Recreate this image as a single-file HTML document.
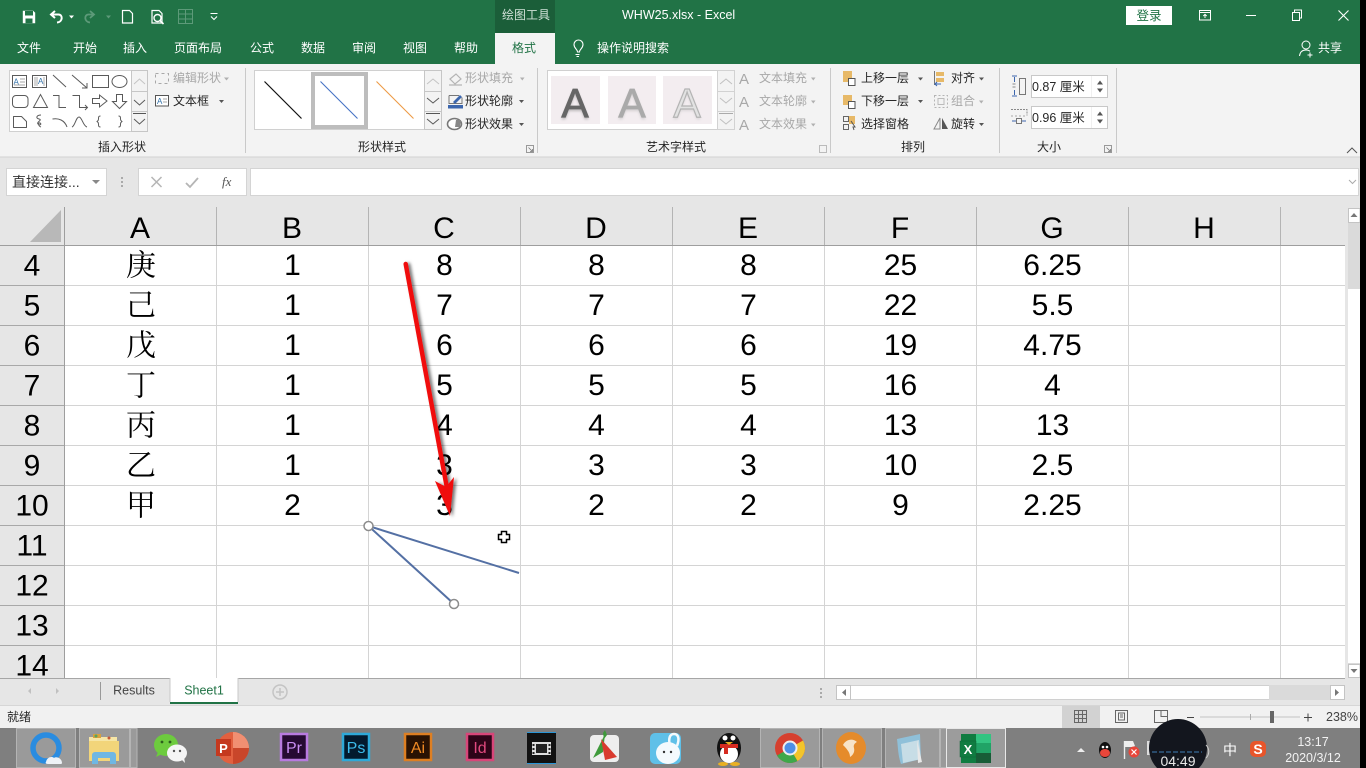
<!DOCTYPE html>
<html><head><meta charset="utf-8"><style>
html,body{margin:0;padding:0;background:#000;overflow:hidden}
svg{display:block;font-family:"Liberation Sans","Noto Sans CJK SC",sans-serif}
.r{font-size:12px;fill:#262626}
.g{font-size:12px;fill:#a8a8a8}
.w{font-size:12px;fill:#fff}
.c{font-size:30px;fill:#000;text-anchor:middle;font-family:"Liberation Sans",sans-serif}
.z{font-size:30px;fill:#000;text-anchor:middle;font-family:"Noto Serif CJK SC",serif}
.m{text-anchor:middle}
.s{fill:none;stroke:#5a5a5a;stroke-width:1}
.d{fill:#555}
</style></head><body>
<svg width="1366" height="768" viewBox="0 0 1366 768" xmlns="http://www.w3.org/2000/svg">
<defs>
<filter id="sh" x="-30%" y="-10%" width="160%" height="120%"><feDropShadow dx="2.5" dy="1" stdDeviation="1.6" flood-color="#000" flood-opacity=".55"/></filter>
<filter id="bl" x="-20%" y="-20%" width="140%" height="150%"><feGaussianBlur stdDeviation="1.4"/></filter>
</defs>
<!-- title bar -->
<rect width="1366" height="64" fill="#217346"/>
<rect x="495" y="0" width="60" height="33" fill="#1b5e39"/>
<rect x="495" y="33" width="60" height="31" fill="#f3f3f3"/>
<g fill="none" stroke="#fff" stroke-width="1.6">
<path d="M22.800 10.800h10.400l2 2v10.400h-12.400z" fill="#fff" stroke="none"/>
<rect x="25" y="11" width="8" height="4.500" fill="#217346" stroke="none"/>
<rect x="25.500" y="18.500" width="7" height="4.700" fill="#217346" stroke="none"/>
<path d="M55 11l-4 3.500 4 3.500M51.500 14.500h7c4.500 0 4.500 7.500 -1.500 8" stroke-width="2"/>
<path d="M90 11l4 3.500-4 3.500M93.500 14.500h-5c-4.500 0 -4.500 7.500 1.500 8" stroke="#5d9a79" stroke-width="1.800"/>
<path d="M122.500 10.500h7l3 3v9.500h-10z" stroke-width="1.200"/>
<path d="M152 10.500h7l3 3v9.500h-10z" stroke-width="1.200"/>
<circle cx="157.500" cy="18" r="3.500" stroke-width="1.400"/><path d="M160 20.500l3.500 3.500" stroke-width="1.600"/>
<rect x="178.500" y="9.500" width="14" height="14" stroke="#5d9a79" stroke-width="1"/><path d="M178.500 14h14M178.500 19h14M185.500 9.500v14" stroke="#5d9a79" stroke-width="1"/>
<path d="M210.500 13.500h7M211 16.500l3 3 3-3" stroke-width="1.100"/>
</g>
<path d="M69 15.500h5l-2.500 3z" fill="#fff"/><path d="M106 15.500h5l-2.500 3z" fill="#5d9a79"/>
<text x="502" y="19" class="w" style="fill:#cfe0d6">绘图工具</text>
<text x="622" y="19" class="w" style="font-size:12.500px">WHW25.xlsx  -  Excel</text>
<rect x="1126" y="6" width="46" height="19" fill="#fff"/>
<text x="1149" y="20" class="r m" style="fill:#217346;font-size:12.500px">登录</text>
<g fill="none" stroke="#fff" stroke-width="1">
<rect x="1199.500" y="10.500" width="11" height="9.500"/><path d="M1199.500 12.500h11M1205 18v-3.500M1203.300 16l1.700-1.700 1.700 1.700"/>
<path d="M1246 15.500h10"/>
<rect x="1292.500" y="12.500" width="7" height="8"/><path d="M1294.500 12.500v-2.500h7v8h-2"/>
<path d="M1338.500 10.500l10 10M1348.500 10.500l-10 10" stroke-width="1.100"/>
<path d="M577.500 52.500c0-3-3.500-3.500-3.500-7.500a4.500 4.500 0 0 1 9 0c0 4-3.500 4.500-3.500 7.500h-2zM575.500 55h4M576.500 57h2.500" transform="translate(0 -.5)" stroke-width="1.100"/>
<circle cx="1306" cy="45" r="4"/><path d="M1299.500 56c.5-4 3-6 6.500-6 1.500 0 3 .4 4 1.300M1310 52.500v5M1307.500 55h5"/>
</g>
<g class="w" text-anchor="middle">
<text x="29" y="52">文件</text><text x="85" y="52">开始</text><text x="135" y="52">插入</text><text x="198" y="52">页面布局</text><text x="262" y="52">公式</text><text x="313" y="52">数据</text><text x="364" y="52">审阅</text><text x="415" y="52">视图</text><text x="466" y="52">帮助</text>
</g>
<text x="524" y="52" class="m" style="font-size:12px;fill:#217346">格式</text>
<text x="597" y="52" class="w">操作说明搜索</text>
<text x="1318" y="52" class="w">共享</text>

<!-- ribbon -->
<rect y="64" width="1366" height="93" fill="#f3f3f3"/>
<rect y="157" width="1366" height="50" fill="#e6e6e6"/>
<rect y="156.500" width="1366" height="1" fill="#d2d2d2"/>
<g fill="#c9c9c9"><rect x="245" y="68" width="1" height="85"/><rect x="537" y="68" width="1" height="85"/><rect x="830" y="68" width="1" height="85"/><rect x="999" y="68" width="1" height="85"/><rect x="1116" y="68" width="1" height="85"/></g>

<!-- insert shapes gallery -->
<rect x="9.500" y="70.500" width="138" height="61" fill="#fff" stroke="#d0d0d0"/>
<rect x="131.500" y="70.500" width="16" height="61" fill="#f3f3f3" stroke="#c6c6c6"/>
<path d="M131.500 91.500h16M131.500 111.500h16" stroke="#c6c6c6"/>
<path d="M133 113.500h13" stroke="#555"/>
<path d="M134 84l5.500-5 5.500 5" fill="none" stroke="#c4c4c4"/><path d="M134 100l5.500 5 5.500-5M134 119l5.500 5 5.500-5" class="s"/>
<g class="s">
<rect x="12.500" y="75.500" width="14" height="12"/>
<rect x="32.500" y="75.500" width="14" height="12"/>
<path d="M53 75l13 12"/><path d="M72 75l15 13M87 83v5h-5"/>
<rect x="92.500" y="75.500" width="16" height="12"/><ellipse cx="119.500" cy="81.500" rx="7.500" ry="6"/>
<rect x="12.500" y="95.500" width="15.500" height="12" rx="3.500"/><path d="M33.500 107.500l7-13 7 13z"/>
<path d="M53 95.500h6v12h7"/><path d="M72.500 95.500h7v12h8M85 105l2.500 2.500-2.500 2.500"/>
<path d="M92.500 98.500h7v-3.500l7.500 6-7.500 6v-3.500h-7z"/><path d="M116.500 94.500h6v7h4l-7 7-7-7h4z"/>
<path d="M13.500 116.500h8l5 5v6h-13z" stroke-linejoin="round"/><path d="M41 115c-4 0-6 3-2 4 4 1-3 3-1 5 2 2 4 0 2-1-2-1-2 3 1 4"/>
<path d="M52.500 119c6-1 12 1 14.500 8"/><path d="M72 127c3-1 4-10 7-10 3 0 4 9 8 10"/>
<path d="M100.500 116c-2 0-2 1-2 3s-1 2-1.500 2.500c.5.500 1.500.5 1.500 2.500s0 3 2 3M118.500 116c2 0 2 1 2 3s1 2 1.500 2.500c-.5.500-1.500.5-1.500 2.500s0 3-2 3"/>
</g>
<text x="13.500" y="84.500" style="font-size:8px;fill:#2e6fa8">A</text><path d="M20 79h5M20 82h5M14 85h11" stroke="#888" stroke-width=".7"/>
<text x="38" y="84" style="font-size:8px;fill:#2e6fa8">A</text><path d="M35 77v9M37 77v9M44 77v9" stroke="#888" stroke-width=".7"/>

<g fill="none" stroke="#a8a8a8"><rect x="155.500" y="73.500" width="13" height="10" stroke-dasharray="3 3"/></g>
<text x="173" y="82" class="g">编辑形状</text><path d="M224 77.500h5l-2.500 3z" fill="#b0b0b0"/>
<rect x="155.500" y="95.500" width="13" height="10.500" fill="#fff" stroke="#555"/><text x="157" y="104" style="font-size:8px;fill:#2e6fa8">A</text><path d="M163 99h4M163 102h4" stroke="#888" stroke-width=".8"/>
<text x="173" y="105" class="r">文本框</text><path d="M219 100h5l-2.500 3z" class="d"/>
<text x="122" y="151" class="r m">插入形状</text>

<!-- shape style gallery -->
<rect x="254.500" y="70.500" width="187" height="59" fill="#fff" stroke="#d0d0d0"/>
<rect x="313" y="74" width="53" height="53" fill="#fff" stroke="#bdbdbd" stroke-width="4"/>
<path d="M264.500 81.500l37 37" stroke="#111" stroke-width="1.200"/>
<path d="M320.500 81.500l37 37" stroke="#4472c4" stroke-width="1.100"/>
<path d="M376.500 81.500l37 37" stroke="#ed9a45" stroke-width="1.100"/>
<rect x="424.500" y="70.500" width="17" height="59" fill="#f3f3f3" stroke="#c6c6c6"/>
<path d="M424.500 91.500h17M424.500 111.500h17" stroke="#c6c6c6"/><path d="M426 113.500h14" stroke="#555"/>
<path d="M427 84l6-5 6 5" fill="none" stroke="#c4c4c4"/><path d="M427 98l6 5 6-5M427 119l6 5 6-5" class="s"/>
<path d="M450 79l6-5 5 5-6 5zM449 85h13" fill="none" stroke="#b4b4b4" stroke-width="1.200"/>
<text x="465" y="82" class="g">形状填充</text><path d="M520 77.500h4.500l-2.200 3z" fill="#b0b0b0"/>
<rect x="448" y="105" width="15" height="3.500" fill="#3c66ad"/><path d="M449 95.500h10M449 95.500v8h13v-6" fill="none" stroke="#777"/><path d="M453 102l7-7 2 2-7 7z" fill="#3c66ad"/>
<text x="465" y="105" class="r">形状轮廓</text><path d="M519 100h5l-2.500 3z" class="d"/>
<ellipse cx="454.500" cy="124" rx="7" ry="5.500" fill="#fff" stroke="#777" stroke-width="1.600"/><path d="M456 120h5l-1 7h-5z" fill="#888"/>
<text x="465" y="128" class="r">形状效果</text><path d="M519 123h5l-2.500 3z" class="d"/>
<text x="382" y="151" class="r m">形状样式</text>
<rect x="526.500" y="145.500" width="7" height="7" fill="none" stroke="#999"/><path d="M528.500 147.500l4 4M532.500 149v2.500h-2.500" fill="none" stroke="#777" stroke-width=".8"/>

<!-- wordart gallery -->
<rect x="547.500" y="70.500" width="187" height="59" fill="#fff" stroke="#d0d0d0"/>
<rect x="551" y="76" width="49" height="48" fill="#f3edf0"/><rect x="608" y="76" width="48" height="48" fill="#f3edf0"/><rect x="663" y="76" width="49" height="48" fill="#f3edf0"/>
<g filter="url(#bl)" opacity=".45" style="font-family:'Liberation Sans';font-size:41px" text-anchor="middle"><text x="575" y="119" fill="#777">A</text><text x="632" y="119" fill="#aaa">A</text><text x="687" y="119" fill="#bbb">A</text></g>
<text x="575" y="117" class="m" style="font-size:41px;fill:#666;stroke:#666;stroke-width:.8;font-family:'Liberation Sans'">A</text>
<text x="632" y="117" class="m" style="font-size:41px;fill:#aaa;stroke:#aaa;stroke-width:.8;font-family:'Liberation Sans'">A</text>
<text x="687" y="117" class="m" style="font-size:41px;fill:#e2e2e2;stroke:#b4b4b4;stroke-width:1.200;font-family:'Liberation Sans'">A</text>
<rect x="717.500" y="70.500" width="17" height="59" fill="#f3f3f3" stroke="#d2d2d2"/>
<path d="M717.500 91.500h17M717.500 111.500h17" stroke="#d2d2d2"/><path d="M719 113.500h14" stroke="#aaa"/>
<path d="M720 84l6-5 6 5M720 98l6 5 6-5M720 119l6 5 6-5" fill="none" stroke="#c0c0c0"/>
<g style="font-size:15px;fill:#a8a8a8;font-family:'Liberation Sans'"><text x="744" y="84" class="m">A</text><text x="744" y="107" class="m">A</text><text x="744" y="130" class="m">A</text></g>
<text x="759" y="82" class="g">文本填充</text><text x="759" y="105" class="g">文本轮廓</text><text x="759" y="128" class="g">文本效果</text>
<path d="M811 77.500h4.500l-2.200 3zM811 100.500h4.500l-2.200 3zM811 123.500h4.500l-2.200 3z" fill="#b0b0b0"/>
<text x="676" y="151" class="r m">艺术字样式</text>
<rect x="819.500" y="145.500" width="7" height="7" fill="none" stroke="#bbb"/>

<!-- arrange -->
<rect x="843" y="71" width="9" height="11" fill="#e7b968"/><rect x="848.500" y="78.500" width="6.500" height="7" fill="#fff" stroke="#555"/>
<text x="861" y="82" class="r">上移一层</text><path d="M918 77.500h5l-2.500 3z" class="d"/>
<rect x="843" y="95" width="9" height="10" fill="#e7b968"/><rect x="848.500" y="101.500" width="6.500" height="7" fill="#fff" stroke="#555"/>
<text x="861" y="105" class="r">下移一层</text><path d="M918 100h5l-2.500 3z" class="d"/>
<path d="M843.500 116.500h5v5h-5zM843.500 124.500h5v5h-5z" fill="none" stroke="#666"/><rect x="849" y="116" width="6" height="8" fill="#e7b968"/><path d="M851 121l4 6-2 0 1 3" fill="none" stroke="#555"/>
<text x="861" y="128" class="r">选择窗格</text>
<rect x="936" y="72" width="8" height="4" fill="#e7b968"/><rect x="936" y="78" width="8" height="4" fill="#e7b968"/><path d="M934.500 71v14" stroke="#777"/><path d="M935 84h6M937 82l-2 2 2 2" fill="none" stroke="#3c66ad"/>
<text x="951" y="82" class="r">对齐</text><path d="M979 77.500h5l-2.500 3z" class="d"/>
<rect x="934.500" y="95.500" width="13" height="12" fill="none" stroke="#b4b4b4" stroke-dasharray="2 2"/><rect x="938" y="98.500" width="6" height="6" fill="none" stroke="#bbb"/>
<text x="951" y="105" class="g">组合</text><path d="M979 100.500h4.500l-2.200 3z" fill="#b0b0b0"/>
<path d="M940 118l-6 11h6z" fill="none" stroke="#888"/><path d="M942 118l6 11h-6z" fill="#555"/>
<text x="951" y="128" class="r">旋转</text><path d="M979 123h5l-2.500 3z" class="d"/>
<text x="913" y="151" class="r m">排列</text>

<!-- size -->
<path d="M1012 76h5M1012 96h5M1014.500 77v5M1014.500 90v5" stroke="#3c66ad" fill="none"/><rect x="1019.500" y="78.500" width="6" height="16" fill="none" stroke="#777"/><path d="M1012.500 84h3M1012.500 87h3" stroke="#888"/>
<path d="M1011 109.500h16v6" fill="none" stroke="#888" stroke-dasharray="2 1"/><path d="M1011 116h16" stroke="#aaa" stroke-dasharray="2 2"/><path d="M1012 121h4M1022 121h4" stroke="#3c66ad"/><rect x="1016.500" y="118.500" width="5" height="5" fill="none" stroke="#777"/>
<rect x="1031.500" y="75.500" width="76" height="22" fill="#fff" stroke="#c8c8c8"/><rect x="1031.500" y="106.500" width="76" height="22" fill="#fff" stroke="#c8c8c8"/>
<path d="M1091.500 76v21M1091.500 107v21" stroke="#f0f0f0"/>
<text x="1032" y="91" class="r" style="font-size:12.500px">0.87 厘米</text><text x="1032" y="122" class="r" style="font-size:12.500px">0.96 厘米</text>
<path d="M1097 84.500h6l-3-4zM1097 88.500h6l-3 4zM1097 115.500h6l-3-4zM1097 119.500h6l-3 4z" class="d"/>
<text x="1049" y="151" class="r m">大小</text>
<rect x="1104.500" y="145.500" width="7" height="7" fill="none" stroke="#999"/><path d="M1106.500 147.500l4 4M1110.500 149v2.500h-2.500" fill="none" stroke="#777" stroke-width=".8"/>
<path d="M1347 153l5-5 5 5" fill="none" stroke="#555"/>

<!-- formula bar -->
<rect x="6.500" y="168.500" width="100" height="27" fill="#fff" stroke="#d4d4d4"/>
<text x="12" y="187" style="font-size:14px;fill:#333">直接连接...</text>
<path d="M92 180h8l-4 4z" fill="#888"/>
<g fill="#aaa"><rect x="121" y="177" width="2" height="2"/><rect x="121" y="181" width="2" height="2"/><rect x="121" y="185" width="2" height="2"/></g>
<rect x="138.500" y="168.500" width="108" height="27" fill="#fff" stroke="#d4d4d4"/>
<rect x="250.500" y="168.500" width="1108" height="27" fill="#fff" stroke="#d4d4d4"/>
<path d="M151.500 177l10 10M161.500 177l-10 10" stroke="#b5b5b5" stroke-width="1.500"/>
<path d="M186 183l4 4 8-9" fill="none" stroke="#b5b5b5" stroke-width="1.800"/>
<text x="222" y="186" style="font:italic 13px 'Liberation Serif',serif;fill:#555">fx</text>
<path d="M1349 180l3.500 3.500 3.500-3.500" fill="none" stroke="#aaa"/>

<!-- sheet -->
<rect x="65" y="245" width="1280" height="433" fill="#fff"/>
<rect y="207" width="1345" height="38" fill="#e6e6e6"/>
<rect y="245" width="65" height="433" fill="#e6e6e6"/>
<path d="M30 242h31v-32z" fill="#b8b8b8"/>
<g stroke="#d4d4d4" fill="none"><path d="M65 285.500h1280M65 325.500h1280M65 365.500h1280M65 405.500h1280M65 445.500h1280M65 485.500h1280M65 525.500h1280M65 565.500h1280M65 605.500h1280M65 645.500h1280"/>
<path d="M216.500 245v433M368.500 245v433M520.500 245v433M672.500 245v433M824.500 245v433M976.500 245v433M1128.500 245v433M1280.500 245v433"/></g>
<path d="M216.500 207v38M368.500 207v38M520.500 207v38M672.500 207v38M824.500 207v38M976.500 207v38M1128.500 207v38M1280.500 207v38" stroke="#b4b4b4"/>
<path d="M0 245.500h1345" stroke="#9e9e9e"/><path d="M64.500 207v471" stroke="#9e9e9e"/>
<path d="M0 285.500h64M0 325.500h64M0 365.500h64M0 405.500h64M0 445.500h64M0 485.500h64M0 525.500h64M0 565.500h64M0 605.500h64M0 645.500h64" stroke="#a8a8a8"/>
<g class="c"><text x="140" y="238">A</text><text x="292" y="238">B</text><text x="444" y="238">C</text><text x="596" y="238">D</text><text x="748" y="238">E</text><text x="900" y="238">F</text><text x="1052" y="238">G</text><text x="1204" y="238">H</text></g>
<g class="c"><text x="32" y="275.500">4</text><text x="32" y="315.500">5</text><text x="32" y="355.500">6</text><text x="32" y="395.500">7</text><text x="32" y="435.500">8</text><text x="32" y="475.500">9</text><text x="32" y="515.500">10</text><text x="32" y="555.500">11</text><text x="32" y="595.500">12</text><text x="32" y="635.500">13</text><text x="32" y="675.500">14</text></g>
<g class="z"><text x="141" y="275.500">庚</text><text x="141" y="315.500">己</text><text x="141" y="355.500">戊</text><text x="141" y="395.500">丁</text><text x="141" y="435.500">丙</text><text x="141" y="475.500">乙</text><text x="141" y="515.500">甲</text></g>
<g class="c" transform="translate(.5 -1)">
<text x="292" y="276">1</text><text x="444" y="276">8</text><text x="596" y="276">8</text><text x="748" y="276">8</text><text x="900" y="276">25</text><text x="1052" y="276">6.25</text>
<text x="292" y="316">1</text><text x="444" y="316">7</text><text x="596" y="316">7</text><text x="748" y="316">7</text><text x="900" y="316">22</text><text x="1052" y="316">5.5</text>
<text x="292" y="356">1</text><text x="444" y="356">6</text><text x="596" y="356">6</text><text x="748" y="356">6</text><text x="900" y="356">19</text><text x="1052" y="356">4.75</text>
<text x="292" y="396">1</text><text x="444" y="396">5</text><text x="596" y="396">5</text><text x="748" y="396">5</text><text x="900" y="396">16</text><text x="1052" y="396">4</text>
<text x="292" y="436">1</text><text x="444" y="436">4</text><text x="596" y="436">4</text><text x="748" y="436">4</text><text x="900" y="436">13</text><text x="1052" y="436">13</text>
<text x="292" y="476">1</text><text x="444" y="476">3</text><text x="596" y="476">3</text><text x="748" y="476">3</text><text x="900" y="476">10</text><text x="1052" y="476">2.5</text>
<text x="292" y="516">2</text><text x="444" y="516">3</text><text x="596" y="516">2</text><text x="748" y="516">2</text><text x="900" y="516">9</text><text x="1052" y="516">2.25</text>
</g>
<!-- drawn lines -->
<g filter="url(#sh)">
<path d="M405.700 264l42 228" stroke="#f00c0c" stroke-width="4.500" stroke-linecap="round" fill="none"/>
<path d="M450 516l-15-35 11 6 8-10z" fill="#f00c0c"/>
</g>
<path d="M368.500 526L519 573M368.500 526L454 604" stroke="#5470a4" stroke-width="2" fill="none"/>
<circle cx="368.500" cy="526" r="4.500" fill="#fff" stroke="#8c8c8c" stroke-width="1.500"/>
<circle cx="454" cy="604" r="4.500" fill="#fff" stroke="#8c8c8c" stroke-width="1.500"/>
<path d="M501.500 531.500h5v3h3v5h-3v3h-5v-3h-3v-5h3z" fill="#fff" stroke="#000" stroke-width="1.500"/>

<!-- v scrollbar -->
<rect x="1345" y="207" width="15" height="471" fill="#e6e6e6"/>
<rect x="1348" y="222" width="12" height="442" fill="#dadada"/>
<rect x="1348" y="289" width="12" height="374" fill="#fff"/>
<rect x="1348.500" y="208.500" width="11.500" height="14" fill="#fff" stroke="#c4c4c4"/>
<rect x="1348.500" y="664.500" width="11.500" height="13" fill="#fff" stroke="#c4c4c4"/>
<path d="M1350.500 217h7l-3.500-4zM1350.500 669h7l-3.500 4z" fill="#777"/>

<!-- sheet tabs -->
<rect y="678" width="1360" height="27" fill="#e6e6e6"/>
<rect y="678" width="1345" height="1" fill="#a6a6a6"/>
<path d="M100.500 682v18" stroke="#999"/>
<path d="M31 688l-3 3 3 3zM56 688l3 3-3 3z" fill="#c0c0c0"/>
<text x="134" y="694.500" class="m" style="font-size:12.500px;fill:#444">Results</text>
<rect x="170" y="678" width="68" height="26" fill="#fff"/><rect x="170" y="702" width="68" height="2" fill="#217346"/>
<path d="M170 678v24M238 678v24" stroke="#c8c8c8" fill="none"/>
<text x="204" y="694.500" class="m" style="font-size:12.500px;fill:#217346">Sheet1</text>
<circle cx="280" cy="692" r="7" fill="none" stroke="#c4c4c4" stroke-width="1.500"/><path d="M276 692h8M280 688v8" stroke="#c4c4c4" stroke-width="1.500"/>
<g fill="#aaa"><rect x="820" y="688" width="2" height="2"/><rect x="820" y="692" width="2" height="2"/><rect x="820" y="696" width="2" height="2"/></g>
<rect x="836.500" y="685.500" width="14" height="14" fill="#fff" stroke="#c4c4c4"/>
<rect x="851" y="685" width="418" height="15" fill="#fff"/>
<rect x="1269" y="685" width="61" height="15" fill="#dadada"/>
<rect x="1330.500" y="685.500" width="14" height="14" fill="#fff" stroke="#c4c4c4"/>
<path d="M846 689l-4 3.500 4 3.500zM1335 689l4 3.500-4 3.500z" fill="#777"/>
<path d="M851 685.500h418M851 699.500h418" stroke="#d0d0d0"/>

<!-- status bar -->
<rect y="705" width="1360" height="23" fill="#f1f1f1"/><rect y="705" width="1360" height="1" fill="#d6d6d6"/>
<text x="7" y="721" class="r">就绪</text>
<rect x="1062" y="706" width="38" height="22" fill="#d2d2d2"/>
<g fill="none" stroke="#666"><rect x="1074.500" y="710.500" width="12" height="12"/><path d="M1074.500 714.500h12M1074.500 718.500h12M1078.500 710.500v12M1082.500 710.500v12"/>
<rect x="1115.500" y="710.500" width="12" height="12"/><rect x="1118.500" y="713" width="6" height="7"/><path d="M1120 715h3M1120 717h3"/>
<path d="M1154.500 710.500h13v12h-13zM1161 710.500v6h6.500"/></g>
<path d="M1187 717.500h7M1304 717.500h8M1308 713.500v8" stroke="#444"/>
<path d="M1200 717h100" stroke="#c4c4c4"/><path d="M1250.500 714v6" stroke="#aaa"/>
<rect x="1270" y="711" width="4" height="12" fill="#666"/>
<text x="1326" y="721" style="font-size:12.500px;fill:#444">238%</text>

<!-- taskbar -->
<rect y="728" width="1360" height="40" fill="#7f7f7f"/>
<g fill="#9a9a9a" stroke="#b4b4b4"><rect x="16.500" y="728.500" width="59" height="39"/><rect x="79.500" y="728.500" width="50" height="39"/><rect x="130.500" y="728.500" width="6.500" height="39"/>
<rect x="760.500" y="728.500" width="59" height="39"/><rect x="822.500" y="728.500" width="59" height="39"/><rect x="885.500" y="728.500" width="54" height="39"/><rect x="940.500" y="728.500" width="7.500" height="39"/></g>
<rect x="946.500" y="728.500" width="59" height="39" fill="#9c9c9c" stroke="#e8e8e8"/>
<!-- qq browser -->
<circle cx="46" cy="748" r="13" fill="none" stroke="#2a8ce0" stroke-width="5.500"/>
<path d="M46 762c1-5 6-6 8-4 2-2 8 0 8 5 0 1-1 1-2 1H48c-2 0-3-1-2-2z" fill="#eef2f6"/>
<!-- folder -->
<path d="M89 737h28v5H89z" fill="#f6e6a6"/><rect x="93" y="734" width="8" height="4" fill="#d8a13d"/><circle cx="96" cy="736" r="1.500" fill="#5aa55a"/><circle cx="109" cy="738" r="1.500" fill="#c85a3a"/>
<rect x="89" y="741" width="30" height="20" fill="#f2d57a"/><path d="M92 764v-9a3 3 0 0 1 3-3h18a3 3 0 0 1 3 3v9h-6v-6h-12v6z" fill="#6fb7e3"/>
<!-- wechat -->
<ellipse cx="166" cy="745" rx="12" ry="11" fill="#6dcb3e"/><path d="M158 752l-2 5 6-3z" fill="#6dcb3e"/><circle cx="162" cy="742" r="1.400" fill="#2d5f1d"/><circle cx="170" cy="742" r="1.400" fill="#2d5f1d"/>
<ellipse cx="177" cy="753" rx="10" ry="8.500" fill="#f5f5f5"/><path d="M181 759l4 4-1-6z" fill="#f5f5f5"/><circle cx="174" cy="751" r="1.200" fill="#555"/><circle cx="180" cy="751" r="1.200" fill="#555"/>
<!-- ppt -->
<circle cx="233" cy="748" r="16" fill="#e2603f"/><path d="M233 732a16 16 0 0 1 16 16h-16z" fill="#f18f72"/><path d="M233 748h16a16 16 0 0 1-16 16z" fill="#c9462a"/>
<rect x="216" y="739" width="15" height="17" fill="#c5391f"/>
<text x="223.500" y="753" class="m" style="font:bold 13px 'Liberation Sans';fill:#fff">P</text>
<!-- adobe -->
<g font-family="Liberation Sans" font-size="16" text-anchor="middle">
<rect x="281" y="734" width="26" height="26" fill="#260a33" stroke="#b87ae0" stroke-width="2.500"/><text x="294" y="753" fill="#c88df2">Pr</text>
<rect x="343" y="734" width="26" height="26" fill="#031a2e" stroke="#2ea9d9" stroke-width="2.500"/><text x="356" y="753" fill="#3cbcec">Ps</text>
<rect x="405" y="734" width="26" height="26" fill="#2a1203" stroke="#de7f22" stroke-width="2.500"/><text x="418" y="753" fill="#f08a24">Ai</text>
<rect x="467" y="734" width="26" height="26" fill="#2e0418" stroke="#d84679" stroke-width="2.500"/><text x="480" y="753" fill="#e2497f">Id</text>
</g>
<!-- film -->
<rect x="527" y="733" width="29" height="30" fill="#111"/><path d="M527 732.500h29M527 763.500h29" stroke="#2a95d6"/>
<rect x="532" y="742" width="19" height="13" fill="#ddd"/><rect x="536" y="744" width="11" height="9" fill="#222"/><g fill="#222"><rect x="532.500" y="744" width="2" height="2"/><rect x="532.500" y="748" width="2" height="2"/><rect x="532.500" y="752" width="2" height="2"/><rect x="548.500" y="744" width="2" height="2"/><rect x="548.500" y="748" width="2" height="2"/><rect x="548.500" y="752" width="2" height="2"/></g>
<!-- colour icon -->
<rect x="590" y="735" width="29" height="27" rx="4" fill="#eee"/><path d="M605 734l-12 24 10-6z" fill="#3f9a3b"/><path d="M601 739l16 18-12 3z" fill="#d93a2e"/><path d="M603 733l2-3 2 5-3 4z" fill="#3f9a3b"/>
<!-- cat -->
<rect x="650" y="733" width="31" height="31" rx="5" fill="#5fc0e8"/><ellipse cx="668" cy="753" rx="12" ry="11" fill="#f4fafd"/><path d="M670 746c-2-8 0-12 4-12s6 4 3 12" fill="none" stroke="#f4fafd" stroke-width="2.500"/><circle cx="664" cy="752" r="1.200" fill="#333"/><circle cx="671" cy="752" r="1.200" fill="#333"/>
<!-- qq -->
<ellipse cx="729" cy="748" rx="12" ry="15" fill="#111"/><ellipse cx="729" cy="754" rx="9" ry="9" fill="#fff"/><rect x="720" y="744" width="18" height="4" fill="#d62b20"/><rect x="724" y="747" width="4" height="7" fill="#d62b20"/>
<circle cx="725" cy="738" r="2.500" fill="#fff"/><circle cx="733" cy="738" r="2.500" fill="#fff"/><path d="M725 742h8l-4 3z" fill="#e9b023"/><ellipse cx="723" cy="764" rx="5" ry="2" fill="#e9b023"/><ellipse cx="735" cy="764" rx="5" ry="2" fill="#e9b023"/>
<!-- chrome -->
<circle cx="790" cy="748" r="15" fill="#d6402f"/><path d="M790 748L777 755.500A15 15 0 0 0 797.500 761z" fill="#3ea84a"/><path d="M790 748l7.500 13A15 15 0 0 0 803 740.500z" fill="#f3c52b"/><circle cx="790" cy="748" r="6.500" fill="#4d8fe6" stroke="#eee" stroke-width="2"/>
<!-- orange browser -->
<ellipse cx="851" cy="748" rx="15" ry="16" fill="#e58b2b"/><path d="M843 745c3-6 10-7 14-3-2 1-4 3-3 6 1 4-1 7-4 9 0-4-2-7-7-12z" fill="#f7e3c7"/>
<!-- notepad -->
<path d="M897 739l23-5 1 25-20 5c-3-8-3-17-4-25z" fill="#8fc0d9"/><path d="M901 744l18-4 2 19-18 4z" fill="#c7dde6"/><path d="M917 740l5 22-4 1z" fill="#e8e8e8"/>
<!-- excel -->
<rect x="961" y="734" width="30" height="29" fill="#107c41"/><rect x="976" y="734" width="15" height="9" fill="#33c481"/><rect x="976" y="743" width="15" height="10" fill="#21a366"/><rect x="976" y="753" width="15" height="10" fill="#185c37"/>
<rect x="960" y="741" width="16" height="16" fill="#107c41" stroke="#0d6636" stroke-width=".5"/>
<text x="968" y="754" class="m" style="font:bold 13px 'Liberation Sans';fill:#fff">X</text>
<!-- tray -->
<path d="M1077 752h8l-4-4z" fill="#eee"/>
<ellipse cx="1105" cy="750" rx="6" ry="8" fill="#111"/><ellipse cx="1105" cy="753" rx="5" ry="4" fill="#e8463a"/><circle cx="1103" cy="747" r="1.300" fill="#fff"/><circle cx="1107" cy="747" r="1.300" fill="#fff"/>
<path d="M1124.500 741v18" stroke="#eee" stroke-width="1.400"/><path d="M1125 741h8l2 5-2 1h-8z" fill="#eee"/>
<circle cx="1134" cy="752" r="5.500" fill="#e8463a"/><path d="M1131.500 749.500l5 5M1136.500 749.500l-5 5" stroke="#fff" stroke-width="1.200"/>
<rect x="1147" y="741" width="3" height="14" fill="#ddd"/>
<circle cx="1178" cy="748" r="29" fill="#13161e"/>
<path d="M1152 752h50" stroke="#3f7fb5" stroke-width="1" stroke-dasharray="5 2"/>
<text x="1178" y="766" class="m" style="font-size:14px;fill:#e8e8e8">04:49</text>
<path d="M1206 745a9 9 0 0 1 0 13" fill="none" stroke="#ccc"/>
<text x="1230" y="755" class="m" style="font-size:14px;fill:#fff">中</text>
<rect x="1250" y="741" width="16" height="16" rx="5" fill="#e8552b"/><text x="1258" y="754" class="m" style="font:bold 14px 'Liberation Sans';fill:#fff">S</text>
<text x="1313" y="746" class="m" style="font-size:12.500px;fill:#f2f2f2">13:17</text>
<text x="1313" y="762" class="m" style="font-size:12.500px;fill:#f2f2f2">2020/3/12</text>
<!-- right strip -->
<rect x="1360" y="0" width="6" height="768" fill="#000"/>
</svg>
</body></html>
